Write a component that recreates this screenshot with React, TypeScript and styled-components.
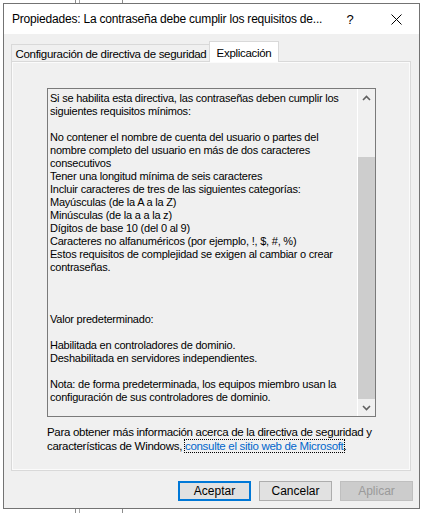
import React from "react";
import styled, { createGlobalStyle } from "styled-components";

const Global = createGlobalStyle`
  html, body { margin: 0; padding: 0; background: #ffffff; }
  #root { position: relative; width: 421px; height: 513px; overflow: hidden; }
  * { box-sizing: border-box; }
`;

const BehindWindow = styled.div`
  position: absolute;
  left: 75px;
  top: -20px;
  width: 48px;
  height: 560px;
  border-left: 1px solid #8c8c8c;
  border-right: 1px solid #8c8c8c;
  &::before {
    content: "";
    position: absolute;
    left: 3px;
    top: 0;
    bottom: 0;
    width: 1px;
    background: #a8a8a8;
  }
`;

const Window = styled.div`
  position: absolute;
  left: 3px;
  top: 3px;
  width: 417px;
  height: 506px;
  border: 1px solid #737373;
  background: #f0f0f0;
  display: flex;
  flex-direction: column;
`;

const TitleBar = styled.div`
  height: 30px;
  background: #ffffff;
  display: flex;
  align-items: center;
  padding-left: 8px;
  font-family: "Liberation Sans", Arial, sans-serif;
  font-size: 12px;
  color: #000;
`;

const TitleText = styled.div`
  flex: 1;
  white-space: nowrap;
  letter-spacing: -0.2px;
`;

const TitleButton = styled.div<{ $w: number }>`
  width: ${(p) => p.$w}px;
  flex: none;
  height: 30px;
  display: flex;
  align-items: center;
  justify-content: center;
  font-size: 13px;
`;

const Body = styled.div`
  flex: 1;
  display: flex;
  flex-direction: column;
  padding: 7px 7px 0 7px;
`;

const TabStrip = styled.div`
  height: 20px;
  display: flex;
  align-items: flex-end;
  position: relative;
  z-index: 1;
  font-family: "Liberation Sans", Arial, sans-serif;
  font-size: 11.5px;
  letter-spacing: -0.3px;
  color: #000;
`;

const Tab = styled.div<{ $active?: boolean; $w: number }>`
  width: ${(p) => p.$w}px;
  height: ${(p) => (p.$active ? 21 : 17)}px;
  margin-bottom: ${(p) => (p.$active ? -1 : 0)}px;
  margin-left: ${(p) => (p.$active ? -2 : 0)}px;
  background: ${(p) => (p.$active ? "#ffffff" : "#f0f0f0")};
  border: 1px solid #d9d9d9;
  border-bottom: none;
  display: flex;
  align-items: center;
  justify-content: center;
  padding-top: 1px;
  white-space: nowrap;
`;

const Panel = styled.div`
  width: 400px;
  height: 410px;
  border: 1px solid #d9d9d9;
  box-shadow: inset 1px 1px 0 #fbfbfb, inset -1px -1px 0 #fbfbfb;
  background: #f0f0f0;
  padding: 26px 0 0 35px;
  display: flex;
  flex-direction: column;
`;

const TextBox = styled.div`
  width: 329px;
  height: 329px;
  border: 1px solid #7a7a7a;
  background: #f0f0f0;
  display: flex;
`;

const TextArea = styled.div`
  flex: 1;
  padding: 3px 0 0 2px;
  font-family: "Liberation Sans", Arial, sans-serif;
  font-size: 11px;
  letter-spacing: -0.22px;
  line-height: 13px;
  color: #000;
  white-space: pre-wrap;
  overflow: hidden;
`;

const ScrollBar = styled.div`
  width: 18px;
  border-left: 1px solid #ffffff;
  background: #f0f0f0;
  display: flex;
  flex-direction: column;
`;

const Arrow = styled.div`
  height: 17px;
  display: flex;
  align-items: center;
  justify-content: center;
`;

const Track = styled.div`
  flex: 1;
  display: flex;
  flex-direction: column;
  justify-content: flex-end;
`;

const Thumb = styled.div`
  height: 242px;
  background: #cdcdcd;
`;

const Info = styled.div`
  margin-top: 8px;
  font-family: "Liberation Sans", Arial, sans-serif;
  font-size: 11.5px;
  letter-spacing: -0.3px;
  line-height: 14px;
  color: #000;
`;

const Link = styled.a`
  color: #0066cc;
  text-decoration: none;
  outline: 1px dotted #000;
  outline-offset: 0px;
`;

const Footer = styled.div`
  display: flex;
  justify-content: flex-end;
  gap: 8px;
  padding: 10px 0 0 0;
  margin-right: -1px;
`;

const Button = styled.div<{ $variant?: "default" | "disabled" }>`
  width: 73px;
  height: 20px;
  display: flex;
  align-items: center;
  justify-content: center;
  font-family: "Liberation Sans", Arial, sans-serif;
  font-size: 12px;
  color: ${(p) => (p.$variant === "disabled" ? "#9a9a9a" : "#000")};
  background: ${(p) => (p.$variant === "disabled" ? "#cccccc" : "#e1e1e1")};
  border: ${(p) =>
    p.$variant === "default"
      ? "2px solid #0078d7"
      : p.$variant === "disabled"
      ? "1px solid #bfbfbf"
      : "1px solid #adadad"};
`;

const text = `Si se habilita esta directiva, las contraseñas deben cumplir los
siguientes requisitos mínimos:

No contener el nombre de cuenta del usuario o partes del
nombre completo del usuario en más de dos caracteres
consecutivos
Tener una longitud mínima de seis caracteres
Incluir caracteres de tres de las siguientes categorías:
Mayúsculas (de la A a la Z)
Minúsculas (de la a a la z)
Dígitos de base 10 (del 0 al 9)
Caracteres no alfanuméricos (por ejemplo, !, $, #, %)
Estos requisitos de complejidad se exigen al cambiar o crear
contraseñas.



Valor predeterminado:

Habilitada en controladores de dominio.
Deshabilitada en servidores independientes.

Nota: de forma predeterminada, los equipos miembro usan la
configuración de sus controladores de dominio.`;

const Chevron = ({ up }: { up?: boolean }) => (
  <svg width="9" height="6" viewBox="0 0 9 6">
    <path
      d={up ? "M1 5 L4.5 1.5 L8 5" : "M1 1 L4.5 4.5 L8 1"}
      fill="none"
      stroke="#606060"
      strokeWidth="1.6"
    />
  </svg>
);

export default function App() {
  return (
    <>
      <Global />
      <BehindWindow />
      <Window>
        <TitleBar>
          <TitleText>Propiedades: La contraseña debe cumplir los requisitos de...</TitleText>
          <TitleButton $w={46}>?</TitleButton>
          <TitleButton $w={46}>
            <svg width="11" height="11" viewBox="0 0 11 11">
              <path d="M0.5 0.5 L10.5 10.5 M10.5 0.5 L0.5 10.5" stroke="#000" strokeWidth="1" fill="none" />
            </svg>
          </TitleButton>
        </TitleBar>
        <Body>
          <TabStrip>
            <Tab $w={200}>Configuración de directiva de seguridad</Tab>
            <Tab $w={70} $active>
              Explicación
            </Tab>
          </TabStrip>
          <Panel>
            <TextBox>
              <TextArea>{text}</TextArea>
              <ScrollBar>
                <Arrow>
                  <Chevron up />
                </Arrow>
                <Track>
                  <Thumb />
                </Track>
                <Arrow>
                  <Chevron />
                </Arrow>
              </ScrollBar>
            </TextBox>
            <Info>
              Para obtener más información acerca de la directiva de seguridad y
              <br />
              características de Windows, <Link>consulte el sitio web de Microsoft</Link>.
            </Info>
          </Panel>
          <Footer>
            <Button $variant="default">Aceptar</Button>
            <Button>Cancelar</Button>
            <Button $variant="disabled">Aplicar</Button>
          </Footer>
        </Body>
      </Window>
    </>
  );
}
